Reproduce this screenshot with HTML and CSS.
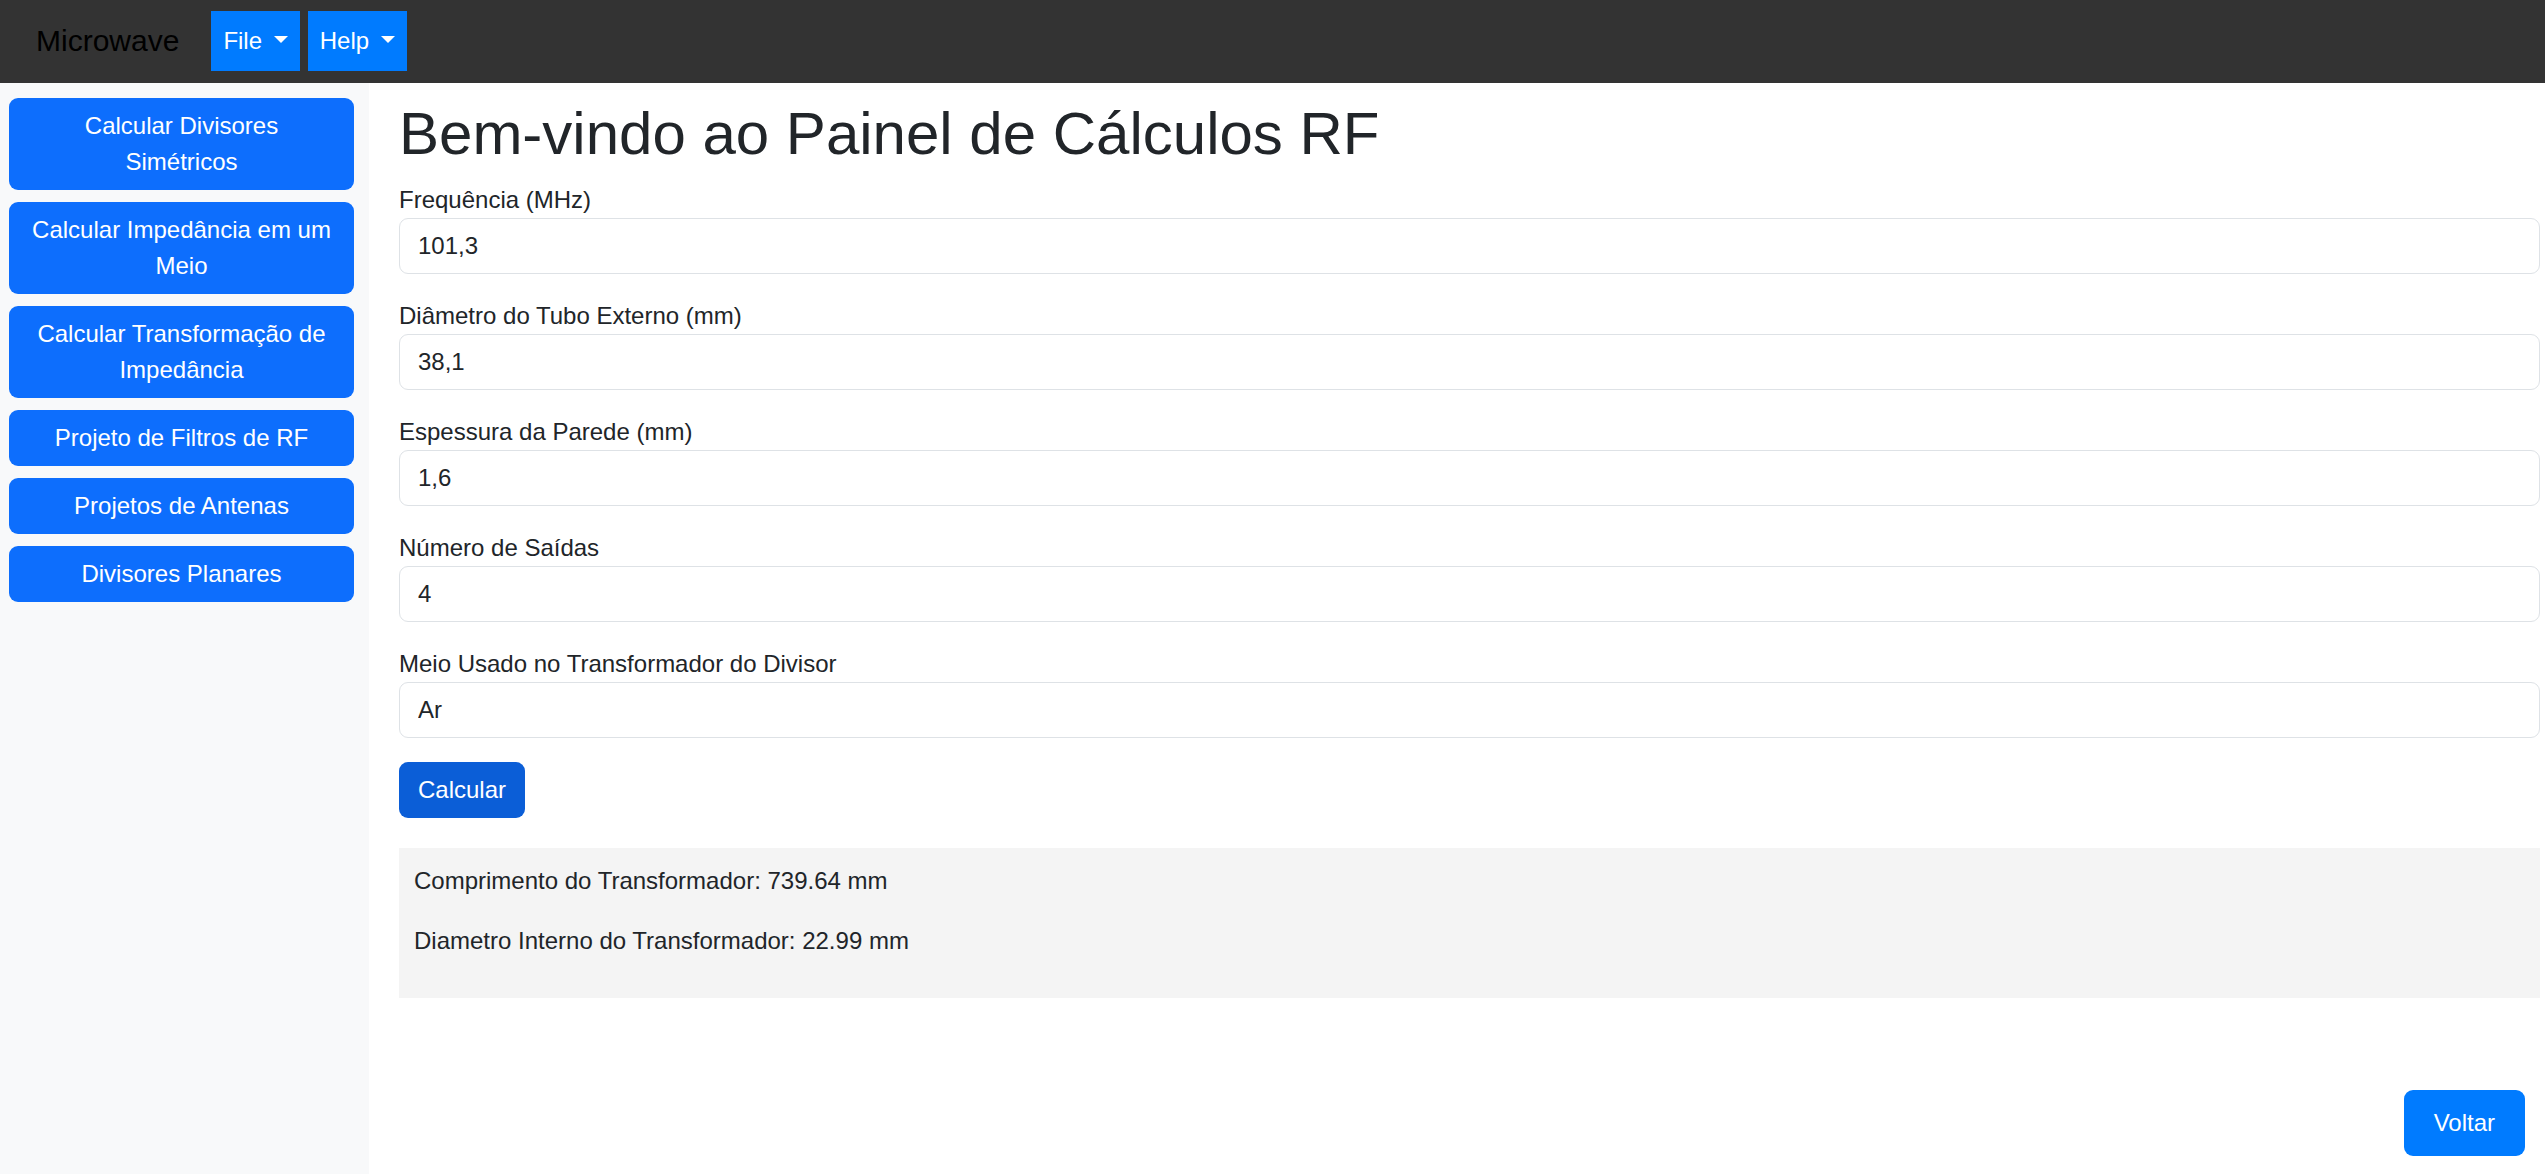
FILE: index.html
```html
<!DOCTYPE html>
<html lang="pt-BR">
<head>
  <meta charset="utf-8">
  <meta name="viewport" content="width=device-width, initial-scale=1">
  <title>Microwave</title>
  <link rel="stylesheet" href="styles.css">
</head>
<body>
  <header class="navbar">
    <a class="brand" href="#">Microwave</a>
    <nav class="menus">
      <button type="button" class="menu-toggle">File <span class="caret"></span></button>
      <button type="button" class="menu-toggle">Help <span class="caret"></span></button>
    </nav>
  </header>
  <div class="layout">
    <aside class="sidebar">
      <button type="button" class="btn">Calcular Divisores Simétricos</button>
      <button type="button" class="btn">Calcular Impedância em um Meio</button>
      <button type="button" class="btn">Calcular Transformação de Impedância</button>
      <button type="button" class="btn">Projeto de Filtros de RF</button>
      <button type="button" class="btn">Projetos de Antenas</button>
      <button type="button" class="btn">Divisores Planares</button>
    </aside>
    <main class="content">
      <h1 class="title">Bem-vindo ao Painel de Cálculos RF</h1>
      <form class="form">
        <div class="field">
          <label for="frequencia">Frequência (MHz)</label>
          <input class="control" id="frequencia" type="text" inputmode="decimal" value="101,3">
        </div>
        <div class="field">
          <label for="diametro">Diâmetro do Tubo Externo (mm)</label>
          <input class="control" id="diametro" type="text" inputmode="decimal" value="38,1">
        </div>
        <div class="field">
          <label for="espessura">Espessura da Parede (mm)</label>
          <input class="control" id="espessura" type="text" inputmode="decimal" value="1,6">
        </div>
        <div class="field">
          <label for="saidas">Número de Saídas</label>
          <input class="control" id="saidas" type="text" inputmode="numeric" value="4">
        </div>
        <div class="field">
          <label for="meio">Meio Usado no Transformador do Divisor</label>
          <input class="control" id="meio" type="text" value="Ar">
        </div>
        <button type="button" class="btn btn-calculate">Calcular</button>
      </form>
      <section class="result">
        <p>Comprimento do Transformador: 739.64 mm</p>
        <p>Diametro Interno do Transformador: 22.99 mm</p>
      </section>
      <button type="button" class="btn btn-back">Voltar</button>
    </main>
  </div>
</body>
</html>
```
FILE: styles.css
```css
* {
  box-sizing: border-box;
}

body {
  display: flex;
  flex-direction: column;
  min-height: 100vh;
  margin: 0;
  background: #fff;
  color: #212529;
  font-family: Arial, "Liberation Sans", sans-serif;
  font-size: 24px;
  line-height: 36px;
}

button,
input {
  font: inherit;
}

button {
  border: 0;
  color: #fff;
  cursor: pointer;
}

.navbar {
  display: flex;
  align-items: center;
  gap: 32px;
  padding: 11px 36px 12px;
  background: #333;
}

.brand {
  color: #000;
  font-size: 30px;
  text-decoration: none;
}

.menus {
  display: flex;
  gap: 8px;
}

.menu-toggle {
  padding: 12px;
  background: #007bff;
}

.caret {
  display: inline-block;
  margin-left: 5px;
  vertical-align: 6px;
  border-top: 7px solid;
  border-right: 7px solid transparent;
  border-left: 7px solid transparent;
}

.layout {
  display: flex;
  flex: 1;
}

.sidebar {
  display: flex;
  flex: 0 0 369px;
  flex-direction: column;
  gap: 12px;
  padding: 15px 15px 15px 9px;
  background: #f8f9fa;
}

.btn {
  padding: 10px 19px;
  border-radius: 9px;
  background: #0d6efd;
}

.content {
  display: flex;
  flex: 1;
  flex-direction: column;
  padding: 15px 5px 18px 30px;
}

.title {
  margin: 0 0 12px;
  font-size: 60px;
  font-weight: 400;
  line-height: 72px;
}

.form {
  display: flex;
  flex-direction: column;
  gap: 24px;
}

.field {
  display: flex;
  flex-direction: column;
}

.control {
  width: 100%;
  height: 56px;
  padding: 9px 18px;
  border: 1px solid #dee2e6;
  border-radius: 9px;
  background: #fff;
  color: inherit;
}

.btn-calculate {
  align-self: flex-start;
  background: #0b5ed7;
}

.result {
  margin-top: 30px;
  padding: 15px;
  background: #f4f4f4;
}

.result p {
  margin: 0 0 24px;
}

.btn-back {
  align-self: flex-end;
  margin: auto 15px 0 0;
  padding: 15px 30px;
  background: #007bff;
}
```
